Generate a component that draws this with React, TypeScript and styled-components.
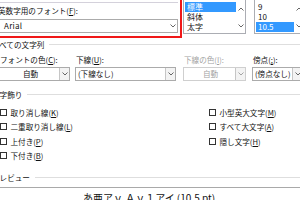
import React from "react";
import styled, { createGlobalStyle } from "styled-components";

const GlobalStyle = createGlobalStyle`
  html, body {
    margin: 0;
    padding: 0;
    background: #fff;
  }
  body {
    font-family: "Noto Sans CJK JP", "Noto Sans", sans-serif;
    font-size: 7.6px;
    color: #111;
  }
`;

const Dialog = styled.div`
  width: 300px;
  height: 200px;
  overflow: hidden;
  background: #fff;
  display: flex;
  flex-direction: column;
`;

const TopRow = styled.div`
  display: flex;
  height: 38px;
  flex-shrink: 0;
`;

const FontPanel = styled.div`
  width: 182px;
  flex-shrink: 0;
  box-sizing: border-box;
  border-right: 2px solid #f01818;
  border-bottom: 2px solid #f01818;
  display: flex;
  flex-direction: column;
`;

const PrevEdge = styled.div`
  height: 2px;
  flex-shrink: 0;
  margin: 0 2px 0 -2px;
  border-bottom: 1px solid #d4d1db;
`;

const Label = styled.div<{ $disabled?: boolean }>`
  height: 12px;
  line-height: 12px;
  padding-left: 1px;
  white-space: nowrap;
  color: ${(p) => (p.$disabled ? "#a3a3a3" : "#111")};
`;

const FontLabel = styled(Label)`
  height: 16px;
  line-height: 16px;
  margin-left: -3px;
`;

const Combo = styled.div<{ $disabled?: boolean }>`
  display: flex;
  height: 14px;
  box-sizing: border-box;
  border: 1px solid ${(p) => (p.$disabled ? "#cfcfcf" : "#ababab")};
  background: #fff;
  color: ${(p) => (p.$disabled ? "#a3a3a3" : "#111")};
`;

const FontCombo = styled(Combo)`
  margin: 0 2px 0 -2px;
`;

const ComboText = styled.div<{ $center?: boolean; $latin?: boolean }>`
  flex: 1;
  line-height: 12px;
  padding-left: ${(p) => (p.$latin ? "5px" : "2px")};
  white-space: nowrap;
  overflow: hidden;
  font-size: ${(p) => (p.$latin ? "8px" : "inherit")};
  letter-spacing: ${(p) => (p.$latin ? "0.3px" : "0")};
  text-align: ${(p) => (p.$center ? "center" : "left")};
`;

const DropButton = styled.div<{ $plain?: boolean }>`
  width: 10px;
  flex-shrink: 0;
  display: flex;
  align-items: center;
  justify-content: center;
  box-sizing: border-box;
  border-left: 1px solid ${(p) => (p.$plain ? "transparent" : "#c6c6c6")};
  background: ${(p) => (p.$plain ? "#fff" : "#f3f3f3")};
`;

const ListBox = styled.div<{ $width: number; $gap: number }>`
  width: ${(p) => p.$width}px;
  margin-left: ${(p) => p.$gap}px;
  margin-top: -1px;
  height: 35px;
  flex-shrink: 0;
  box-sizing: border-box;
  border: 1px solid #abadb3;
  display: flex;
`;

const ListItems = styled.div`
  flex: 1;
  padding: 2px 1px 0 1px;
`;

const ListItem = styled.div<{ $selected?: boolean }>`
  height: 10px;
  line-height: 10px;
  overflow: hidden;
  padding-left: 2px;
  font-size: 8px;
  font-family: "Noto Sans CJK JP", "Liberation Sans", sans-serif;
  background: ${(p) => (p.$selected ? "#3399ff" : "transparent")};
  color: ${(p) => (p.$selected ? "#fff" : "#111")};
`;

const ScrollCol = styled.div`
  width: 8px;
  display: flex;
  flex-direction: column;
  justify-content: space-between;
  align-items: center;
  padding: 7px 0 5px;
`;

const GroupHeader = styled.div<{ $top: number }>`
  display: flex;
  align-items: center;
  gap: 5px;
  height: 12px;
  flex-shrink: 0;
  margin: ${(p) => p.$top}px 0 0 -8px;
  white-space: nowrap;
  &::after {
    content: "";
    flex: 1;
    height: 1px;
    background: #dedede;
  }
`;

const FieldRow = styled.div`
  display: flex;
  margin: 4px 0 0 -1px;
  flex-shrink: 0;
`;

const Field = styled.div<{ $width: number; $gap: number }>`
  width: ${(p) => p.$width}px;
  margin-left: ${(p) => p.$gap}px;
  flex-shrink: 0;
  display: flex;
  flex-direction: column;
  gap: 1px;
`;

const CheckGrid = styled.div`
  display: grid;
  grid-template-columns: 209px 1fr;
  grid-auto-rows: 14.5px;
  margin-top: 5px;
  flex-shrink: 0;
`;

const CheckItem = styled.label`
  display: flex;
  align-items: center;
  gap: 3.5px;
  white-space: nowrap;
`;

const CheckBox = styled.span`
  width: 7px;
  height: 7px;
  box-sizing: border-box;
  border: 1px solid #333;
  background: #fff;
  flex-shrink: 0;
`;

const Preview = styled.div`
  margin: 4px 0 0 -2px;
  border-top: 1px solid #a9a9a9;
  height: 30px;
  flex-shrink: 0;
  text-align: center;
  font-size: 10px;
  line-height: 20px;
  white-space: nowrap;
  color: #111;
`;

const Chevron = ({ up, color = "#555" }: { up?: boolean; color?: string }) => (
  <svg width="6" height="4" viewBox="0 0 6 4">
    <path
      d={up ? "M0.5 3.5 L3 1 L5.5 3.5" : "M0.5 0.5 L3 3 L5.5 0.5"}
      fill="none"
      stroke={color}
      strokeWidth="0.9"
    />
  </svg>
);

const Scroll = () => (
  <ScrollCol>
    <Chevron up />
    <Chevron />
  </ScrollCol>
);

const checks: [string, string][] = [
  ["取り消し線(", "K"],
  ["小型英大文字(", "M"],
  ["二重取り消し線(", "L"],
  ["すべて大文字(", "A"],
  ["上付き(", "P"],
  ["隠し文字(", "H"],
  ["下付き(", "B"],
];

export default function App() {
  return (
    <>
      <GlobalStyle />
      <Dialog>
        <TopRow>
          <FontPanel>
            <PrevEdge />
            <FontLabel>
              英数字用のフォント(<u>F</u>):
            </FontLabel>
            <FontCombo>
              <ComboText $latin>Arial</ComboText>
              <DropButton $plain>
                <Chevron />
              </DropButton>
            </FontCombo>
          </FontPanel>
          <ListBox $width={63} $gap={1}>
            <ListItems>
              <ListItem $selected>標準</ListItem>
              <ListItem>斜体</ListItem>
              <ListItem>太字</ListItem>
            </ListItems>
            <Scroll />
          </ListBox>
          <ListBox $width={50} $gap={8}>
            <ListItems>
              <ListItem>9</ListItem>
              <ListItem>10</ListItem>
              <ListItem $selected>10.5</ListItem>
            </ListItems>
            <Scroll />
          </ListBox>
        </TopRow>

        <GroupHeader $top={0}>すべての文字列</GroupHeader>

        <FieldRow>
          <Field $width={71} $gap={0}>
            <Label>
              フォントの色(<u>C</u>):
            </Label>
            <Combo>
              <ComboText $center>自動</ComboText>
              <DropButton>
                <Chevron />
              </DropButton>
            </Combo>
          </Field>
          <Field $width={101} $gap={5}>
            <Label>
              下線(<u>U</u>):
            </Label>
            <Combo>
              <ComboText>(下線なし)</ComboText>
              <DropButton>
                <Chevron />
              </DropButton>
            </Combo>
          </Field>
          <Field $width={63} $gap={7}>
            <Label $disabled>
              下線の色(<u>I</u>):
            </Label>
            <Combo $disabled>
              <ComboText $center>自動</ComboText>
              <DropButton>
                <Chevron color="#9a9a9a" />
              </DropButton>
            </Combo>
          </Field>
          <Field $width={51} $gap={6}>
            <Label>
              傍点(<u>;</u>):
            </Label>
            <Combo>
              <ComboText>(傍点なし)</ComboText>
              <DropButton>
                <Chevron />
              </DropButton>
            </Combo>
          </Field>
        </FieldRow>

        <GroupHeader $top={7}>文字飾り</GroupHeader>

        <CheckGrid>
          {checks.map(([text, key]) => (
            <CheckItem key={key}>
              <CheckBox />
              <span>
                {text}
                <u>{key}</u>)
              </span>
            </CheckItem>
          ))}
        </CheckGrid>

        <GroupHeader $top={8}>プレビュー</GroupHeader>

        <Preview>あ亜アｙ Ａｙ１アイ (10.5 pt)</Preview>
      </Dialog>
    </>
  );
}
